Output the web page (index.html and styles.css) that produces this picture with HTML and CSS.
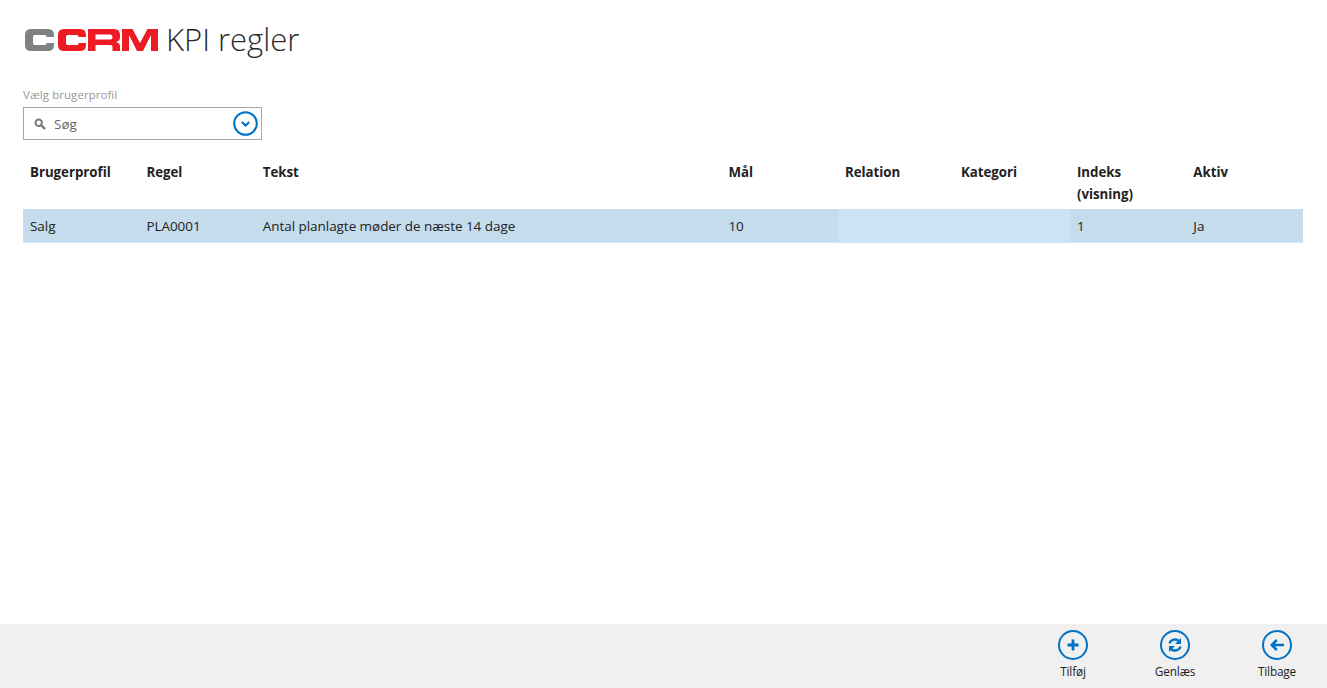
FILE: index.html
```html
<!DOCTYPE html>
<html lang="da">
<head>
<meta charset="utf-8">
<title>KPI regler</title>
<link rel="stylesheet" href="styles.css">
</head>
<body>
<main class="main">
  <header class="page-header">
    <svg class="logo" width="133" height="22" viewBox="0 0 133 22" aria-label="CCRM logo">
      <path class="logo-grey" d="M6 0H23Q29 0 29 6V8H21.500V7.500Q21.500 6 20 6H10Q8 6 8 8V14Q8 16 10 16H20Q21.500 16 21.500 14.500V14H29V16Q29 22 23 22H6Q0 22 0 16V6Q0 0 6 0Z"/>
      <path class="logo-red" d="M39 0H55Q61 0 61 6V8H53.500V7.500Q53.500 6 52 6H43Q41 6 41 8V14Q41 16 43 16H52Q53.500 16 53.500 14.500V14H61V16Q61 22 55 22H39Q33 22 33 16V6Q33 0 39 0Z"/>
      <path class="logo-red" fill-rule="evenodd" d="M63 0H89Q95 0 95 6V8.500Q95 12 91 13Q95 14 95 17V22H87.500V18Q87.500 16 85.500 16H70.500V22H63ZM70.500 5.500V10.500H85.500Q87.500 10.500 87.500 8Q87.500 5.500 85.500 5.500Z"/>
      <path class="logo-red" d="M97 0H107.500L115 14L122.500 0H133V22H126V6L118 22H112L104 6V22H97Z"/>
    </svg>
    <h1 class="title">KPI regler</h1>
  </header>
  <section class="filter">
    <label class="filter-label">Vælg brugerprofil</label>
    <div class="search-box">
      <svg class="search-icon" width="12" height="12" viewBox="0 0 12 12"><circle cx="4.700" cy="4.700" r="3.200" fill="none" stroke="#7a7a7a" stroke-width="2"/><path d="M7 7l4 4" stroke="#7a7a7a" stroke-width="2.400"/></svg>
      <span class="search-text">Søg</span>
      <svg class="chevron" width="25" height="25" viewBox="0 0 25 25"><circle cx="12.500" cy="12.500" r="11.300" fill="#fff" stroke="#0072c6" stroke-width="2"/><path d="M8.800 11l3.700 3.500 3.700-3.500" fill="none" stroke="#0072c6" stroke-width="2"/></svg>
    </div>
  </section>
  <div class="grid head">
    <div class="cell">Brugerprofil</div>
    <div class="cell">Regel</div>
    <div class="cell">Tekst</div>
    <div class="cell">Mål</div>
    <div class="cell">Relation</div>
    <div class="cell">Kategori</div>
    <div class="cell">Indeks (visning)</div>
    <div class="cell">Aktiv</div>
  </div>
  <div class="grid row">
    <div class="cell">Salg</div>
    <div class="cell">PLA0001</div>
    <div class="cell">Antal planlagte møder de næste 14 dage</div>
    <div class="cell">10</div>
    <div class="cell empty"></div>
    <div class="cell empty"></div>
    <div class="cell">1</div>
    <div class="cell">Ja</div>
  </div>
</main>
<footer class="appbar">
  <button class="cmd">
    <svg width="30" height="30" viewBox="0 0 30 30"><circle cx="15" cy="15" r="14" fill="none" stroke="#0072c6" stroke-width="2"/><path d="M15 9.500v11M9.500 15h11" stroke="#0072c6" stroke-width="2.800"/></svg>
    <span>Tilføj</span>
  </button>
  <button class="cmd">
    <svg width="30" height="30" viewBox="0 0 30 30"><circle cx="15" cy="15" r="14" fill="none" stroke="#0072c6" stroke-width="2"/><path d="M9.500 13.500A5.700 5.700 0 0 1 18.800 11" fill="none" stroke="#0072c6" stroke-width="2.400"/><path d="M21 8v6h-6z" fill="#0072c6"/><path d="M20.500 16.500A5.700 5.700 0 0 1 11.200 19" fill="none" stroke="#0072c6" stroke-width="2.400"/><path d="M9 22v-6h6z" fill="#0072c6"/></svg>
    <span>Genlæs</span>
  </button>
  <button class="cmd">
    <svg width="30" height="30" viewBox="0 0 30 30"><circle cx="15" cy="15" r="14" fill="none" stroke="#0072c6" stroke-width="2"/><path d="M22 15H10M14.800 10l-5 5 5 5" fill="none" stroke="#0072c6" stroke-width="2.600"/></svg>
    <span>Tilbage</span>
  </button>
</footer>
</body>
</html>
```
FILE: styles.css
```css
* { box-sizing: border-box; }
html, body { margin: 0; height: 100%; }
body {
  display: flex;
  flex-direction: column;
  height: 688px;
  overflow: hidden;
  background: #fff;
  color: #222;
  font-family: "Open Sans", "Noto Sans", sans-serif;
}
.main { flex: 1; padding: 0 24px 0 23px; }
.page-header { display: flex; align-items: center; gap: 8px; height: 80px; padding: 0 0 0 2px; }
.logo { display: block; margin-top: -1px; }
.logo-grey { fill: #7e8083; }
.logo-red { fill: #ed1c24; }
.title { margin: 0 0 2px; font-weight: 300; font-size: 31px; color: #2a2a2e; }
.filter { width: 239px; }
.filter-label { display: block; height: 27px; padding-top: 7px; font-size: 11.500px; line-height: 16px; letter-spacing: 0.05px; color: #999; }
.search-box { display: flex; align-items: center; height: 33px; border: 1px solid #a6a6a6; padding: 0 3px 0 10px; }
.search-icon { display: block; margin-right: 8px; }
.search-text { flex: 1; font-size: 13.500px; color: #666; }
.chevron { display: block; }
.grid { display: grid; grid-template-columns: 116.400px 116.400px 465.600px 116.600px 116px 116px 116.400px 116.600px; width: 1280px; }
.head { height: 69px; padding-top: 21px; }
.cell { padding: 0 7px; font-size: 13.500px; line-height: 22px; }
.head .cell { font-weight: 700; font-size: 13.300px; letter-spacing: -0.03px; padding-right: 25px; }
.row { height: 34px; background: #c5dcec; border-bottom: 1px solid #d2e4f0; align-items: stretch; }
.row .cell { padding-top: 6px; letter-spacing: -0.05px; }
.row .empty { background: #cbe3f3; }
.appbar { display: flex; justify-content: flex-end; height: 64px; background: #f0f0f0; }
.cmd { display: flex; flex-direction: column; align-items: center; width: 102px; padding: 6px 0 0 2px; border: 0; background: none; font: inherit; font-size: 11.800px; letter-spacing: -0.15px; color: #222; }
.cmd span { line-height: 16px; margin-top: 3px; }
.cmd svg { display: block; }
```
